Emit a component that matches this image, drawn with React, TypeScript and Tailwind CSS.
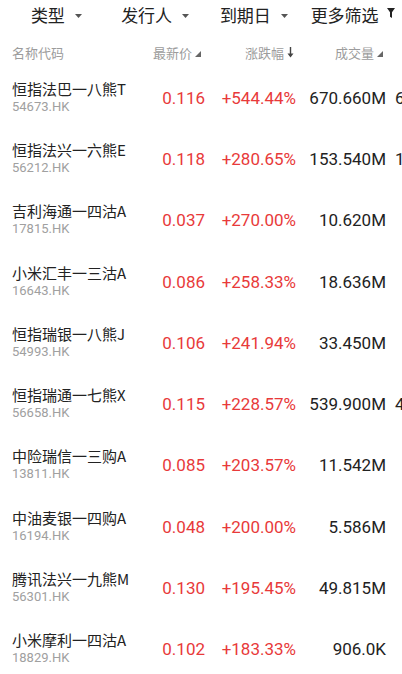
import React from 'react'

interface Warrant {
    name: string
    code: string
    price: string
    change: string
    volume: string
    more?: string
}

const warrants: Warrant[] = [
    { name: '恒指法巴一八熊T', code: '54673.HK', price: '0.116', change: '+544.44%', volume: '670.660M', more: '6' },
    { name: '恒指法兴一六熊E', code: '56212.HK', price: '0.118', change: '+280.65%', volume: '153.540M', more: '1' },
    { name: '吉利海通一四沽A', code: '17815.HK', price: '0.037', change: '+270.00%', volume: '10.620M' },
    { name: '小米汇丰一三沽A', code: '16643.HK', price: '0.086', change: '+258.33%', volume: '18.636M' },
    { name: '恒指瑞银一八熊J', code: '54993.HK', price: '0.106', change: '+241.94%', volume: '33.450M' },
    { name: '恒指瑞通一七熊X', code: '56658.HK', price: '0.115', change: '+228.57%', volume: '539.900M', more: '4' },
    { name: '中险瑞信一三购A', code: '13811.HK', price: '0.085', change: '+203.57%', volume: '11.542M' },
    { name: '中油麦银一四购A', code: '16194.HK', price: '0.048', change: '+200.00%', volume: '5.586M' },
    { name: '腾讯法兴一九熊M', code: '56301.HK', price: '0.130', change: '+195.45%', volume: '49.815M' },
    { name: '小米摩利一四沽A', code: '18829.HK', price: '0.102', change: '+183.33%', volume: '906.0K' },
]

const cjk = "font-['Noto_Sans_CJK_SC',sans-serif]"
const num = "font-['Roboto','Noto_Sans_CJK_SC',sans-serif]"

function Caret() {
    return (
        <svg width="7" height="4" viewBox="0 0 7 4" className="ml-[10px] mt-[2px]">
            <path d="M0 0H7L3.5 4Z" fill="#555" />
        </svg>
    )
}

function Funnel() {
    return (
        <svg width="8" height="10" viewBox="0 0 8 10" className="ml-[8px] -mt-[4px]">
            <path d="M0 0H8L5 4.2V10L3 8.8V4.2Z" fill="#222" />
        </svg>
    )
}

function SortCorner() {
    return (
        <svg width="6" height="6" viewBox="0 0 6 6" className="ml-[3px] mt-[7px]">
            <path d="M6 0V6H0Z" fill="#666" />
        </svg>
    )
}

function SortDown() {
    return (
        <svg width="7" height="11" viewBox="0 0 7 11" className="ml-[3px] mt-[3px]">
            <path d="M3.5 0V9" stroke="#444" strokeWidth="1.4" />
            <path d="M0.5 6.5L3.5 10.5L6.5 6.5Z" fill="#444" />
        </svg>
    )
}

export default function App() {
    return (
        <div className={`w-full min-h-[674px] bg-white overflow-hidden ${cjk}`}>
            {/* Filters */}
            <div className="h-[29px] flex pl-[7px] text-[17px] leading-[29px] text-[#222]">
                {['类型', '发行人', '到期日'].map(label => (
                    <div key={label} className="flex-1 flex items-center justify-center">
                        <span>{label}</span>
                        <Caret />
                    </div>
                ))}
                <div className="flex-1 flex items-center justify-center">
                    <span>更多筛选</span>
                    <Funnel />
                </div>
            </div>

            {/* Column header */}
            <div className="h-[38px] pt-[15px] pl-3 grid grid-cols-[138px_55px_91px_90px_1fr] text-[13px] leading-[18px] text-[#9c9c9c]">
                <div>名称代码</div>
                <div className="flex justify-end pr-[4px]">
                    <span>最新价</span>
                    <SortCorner />
                </div>
                <div className="flex justify-end pr-[2px]">
                    <span>涨跌幅</span>
                    <SortDown />
                </div>
                <div className="flex justify-end pr-[3px]">
                    <span>成交量</span>
                    <SortCorner />
                </div>
                <div />
            </div>

            {/* Rows */}
            {warrants.map(w => (
                <div key={w.code} className="h-[61.3px] pl-3 grid grid-cols-[138px_55px_91px_90px_1fr] items-center">
                    <div className="flex flex-col -mt-[2px]">
                        <span className="text-[15px] leading-[19px] text-[#222] whitespace-nowrap">{w.name}</span>
                        <span className={`${num} text-[13px] leading-[17px] text-[#a0a0a0]`}>{w.code}</span>
                    </div>
                    <div className={`${num} text-[17px] leading-[22px] text-right text-[#e83a3a]`}>{w.price}</div>
                    <div className={`${num} text-[17px] leading-[22px] text-right text-[#e83a3a] whitespace-nowrap`}>{w.change}</div>
                    <div className={`${num} text-[17px] leading-[22px] text-right text-[#222] whitespace-nowrap`}>{w.volume}</div>
                    <div className={`${num} text-[17px] leading-[22px] pl-[9px] text-[#222] whitespace-nowrap`}>{w.more ?? ''}</div>
                </div>
            ))}
        </div>
    )
}
